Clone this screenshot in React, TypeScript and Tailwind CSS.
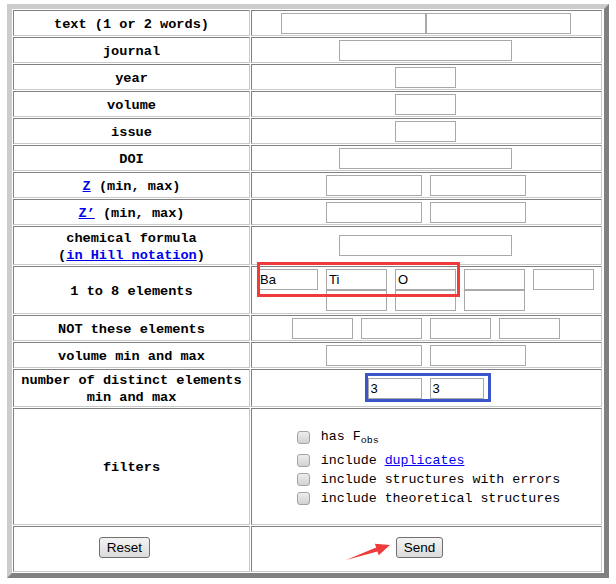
import React from "react";

// inset cell border, like an old-style html table
const cellBase =
  "border border-t-[#808080] border-l-[#808080] border-b-[#c8c8c8] border-r-[#c8c8c8] flex items-center justify-center";

const labelText =
  "pt-[2px] text-center font-['Liberation_Mono',monospace] font-bold text-[13.6px] leading-[17px] text-black";

function Field({ w, value }: { w: string; value?: string }) {
  return (
    <input
      type="text"
      defaultValue={value}
      className={`h-[21px] ${w} border border-[#a9a9a9] bg-white px-[2px] text-[13px] text-black font-['Liberation_Sans',sans-serif] outline-none`}
    />
  );
}

function Label({ h, children }: { h: string; children: React.ReactNode }) {
  return (
    <div className={`${cellBase} ${h}`}>
      <div className={labelText}>{children}</div>
    </div>
  );
}

function Cell({
  h,
  children,
  extra = "",
}: {
  h: string;
  children: React.ReactNode;
  extra?: string;
}) {
  return <div className={`${cellBase} pr-[2px] ${h} ${extra}`}>{children}</div>;
}

function Box() {
  return (
    <span className="w-[13px] h-[13px] rounded-[3px] border border-[#a3a3a3] bg-linear-to-b from-[#ededed] to-[#d2d2d2] shrink-0" />
  );
}

function Check({ children }: { children: React.ReactNode }) {
  return (
    <div className="flex items-center h-[19px]">
      <Box />
      <span className="ml-[11px] font-['Liberation_Mono',monospace] text-[13.3px] text-black whitespace-nowrap">
        {children}
      </span>
    </div>
  );
}

function Btn({ children }: { children: React.ReactNode }) {
  return (
    <button
      type="button"
      className="h-[21px] px-[7px] border border-[#707070] rounded-[3px] bg-linear-to-b from-[#f3f3f3] to-[#dcdcdc] text-[13.5px] leading-none text-black font-['Liberation_Sans',sans-serif]"
    >
      {children}
    </button>
  );
}

const link = "text-[#0000ee] underline";

export default function App() {
  return (
    <div className="min-h-[584px] bg-white pt-[4px] pl-[7px]">
      <div className="w-[602px] border-[5px] border-t-[#cccccc] border-l-[#cccccc] border-r-[#808080] border-b-[#808080] p-[1px] grid grid-cols-[237px_351px] gap-[1px]">
        <Label h="h-[26px]">text (1 or 2 words)</Label>
        <Cell h="h-[26px]">
          <Field w="w-[145px]" />
          <Field w="w-[145px]" />
        </Cell>

        <Label h="h-[26px]">journal</Label>
        <Cell h="h-[26px]">
          <Field w="w-[173px]" />
        </Cell>

        <Label h="h-[26px]">year</Label>
        <Cell h="h-[26px]">
          <Field w="w-[61px]" />
        </Cell>

        <Label h="h-[26px]">volume</Label>
        <Cell h="h-[26px]">
          <Field w="w-[61px]" />
        </Cell>

        <Label h="h-[26px]">issue</Label>
        <Cell h="h-[26px]">
          <Field w="w-[61px]" />
        </Cell>

        <Label h="h-[26px]">DOI</Label>
        <Cell h="h-[26px]">
          <Field w="w-[173px]" />
        </Cell>

        <Label h="h-[26px]">
          <span className={link}>Z</span> (min, max)
        </Label>
        <Cell h="h-[26px]" extra="gap-[8px]">
          <Field w="w-[96px]" />
          <Field w="w-[96px]" />
        </Cell>

        <Label h="h-[26px]">
          <span className={link}>Z’</span> (min, max)
        </Label>
        <Cell h="h-[26px]" extra="gap-[8px]">
          <Field w="w-[96px]" />
          <Field w="w-[96px]" />
        </Cell>

        <Label h="h-[39px]">
          chemical formula
          <br />(<span className={link}>in Hill notation</span>)
        </Label>
        <Cell h="h-[39px]">
          <Field w="w-[173px]" />
        </Cell>

        <Label h="h-[48px]">1 to 8 elements</Label>
        <Cell h="h-[48px]" extra="relative">
          <div className="flex flex-wrap justify-center gap-x-[8px] w-[337px]">
            <Field w="w-[61px]" value="Ba" />
            <Field w="w-[61px]" value="Ti" />
            <Field w="w-[61px]" value="O" />
            <Field w="w-[61px]" />
            <Field w="w-[61px]" />
            <Field w="w-[61px]" />
            <Field w="w-[61px]" />
            <Field w="w-[61px]" />
          </div>
          <div className="absolute left-[5px] top-[-5px] w-[203px] h-[35px] border-[3px] border-[#ef3b3b]" />
        </Cell>

        <Label h="h-[26px]">NOT these elements</Label>
        <Cell h="h-[26px]" extra="gap-[8px]">
          <Field w="w-[61px]" />
          <Field w="w-[61px]" />
          <Field w="w-[61px]" />
          <Field w="w-[61px]" />
        </Cell>

        <Label h="h-[26px]">volume min and max</Label>
        <Cell h="h-[26px]" extra="gap-[8px]">
          <Field w="w-[96px]" />
          <Field w="w-[96px]" />
        </Cell>

        <Label h="h-[38px]">
          number of distinct elements
          <br />
          min and max
        </Label>
        <Cell h="h-[38px]" extra="gap-[8px] relative">
          <Field w="w-[54px]" value="3" />
          <Field w="w-[54px]" value="3" />
          <div className="absolute left-[113px] top-[3px] w-[126px] h-[29px] border-[3px] border-[#3a56c8]" />
        </Cell>

        <Label h="h-[117px]">filters</Label>
        <Cell h="h-[117px]">
          <div className="flex flex-col pt-[2px] ml-[6px]">
            <div className="flex items-center h-[20px] mb-[4px]">
              <Box />
              <span className="ml-[11px] font-['Liberation_Mono',monospace] text-[13.3px] text-black whitespace-nowrap">
                has F<sub>obs</sub>
              </span>
            </div>
            <Check>
              include <span className={link}>duplicates</span>
            </Check>
            <Check>include structures with errors</Check>
            <Check>include theoretical structures</Check>
          </div>
        </Cell>

        <Cell h="h-[46px]" extra="pr-[14px] pb-[3px]">
          <Btn>Reset</Btn>
        </Cell>
        <Cell h="h-[46px]" extra="pr-[14px] pb-[3px] relative">
          <Btn>Send</Btn>
          <svg
            className="absolute left-[90px] top-[12px]"
            width="54"
            height="26"
            viewBox="0 0 54 26"
          >
            <polygon
              points="4,21 35.4,12.4 36.7,16.2 48,6 32.9,4.8 34.2,8.6"
              fill="#ef3b3b"
            />
          </svg>
        </Cell>
      </div>
    </div>
  );
}
